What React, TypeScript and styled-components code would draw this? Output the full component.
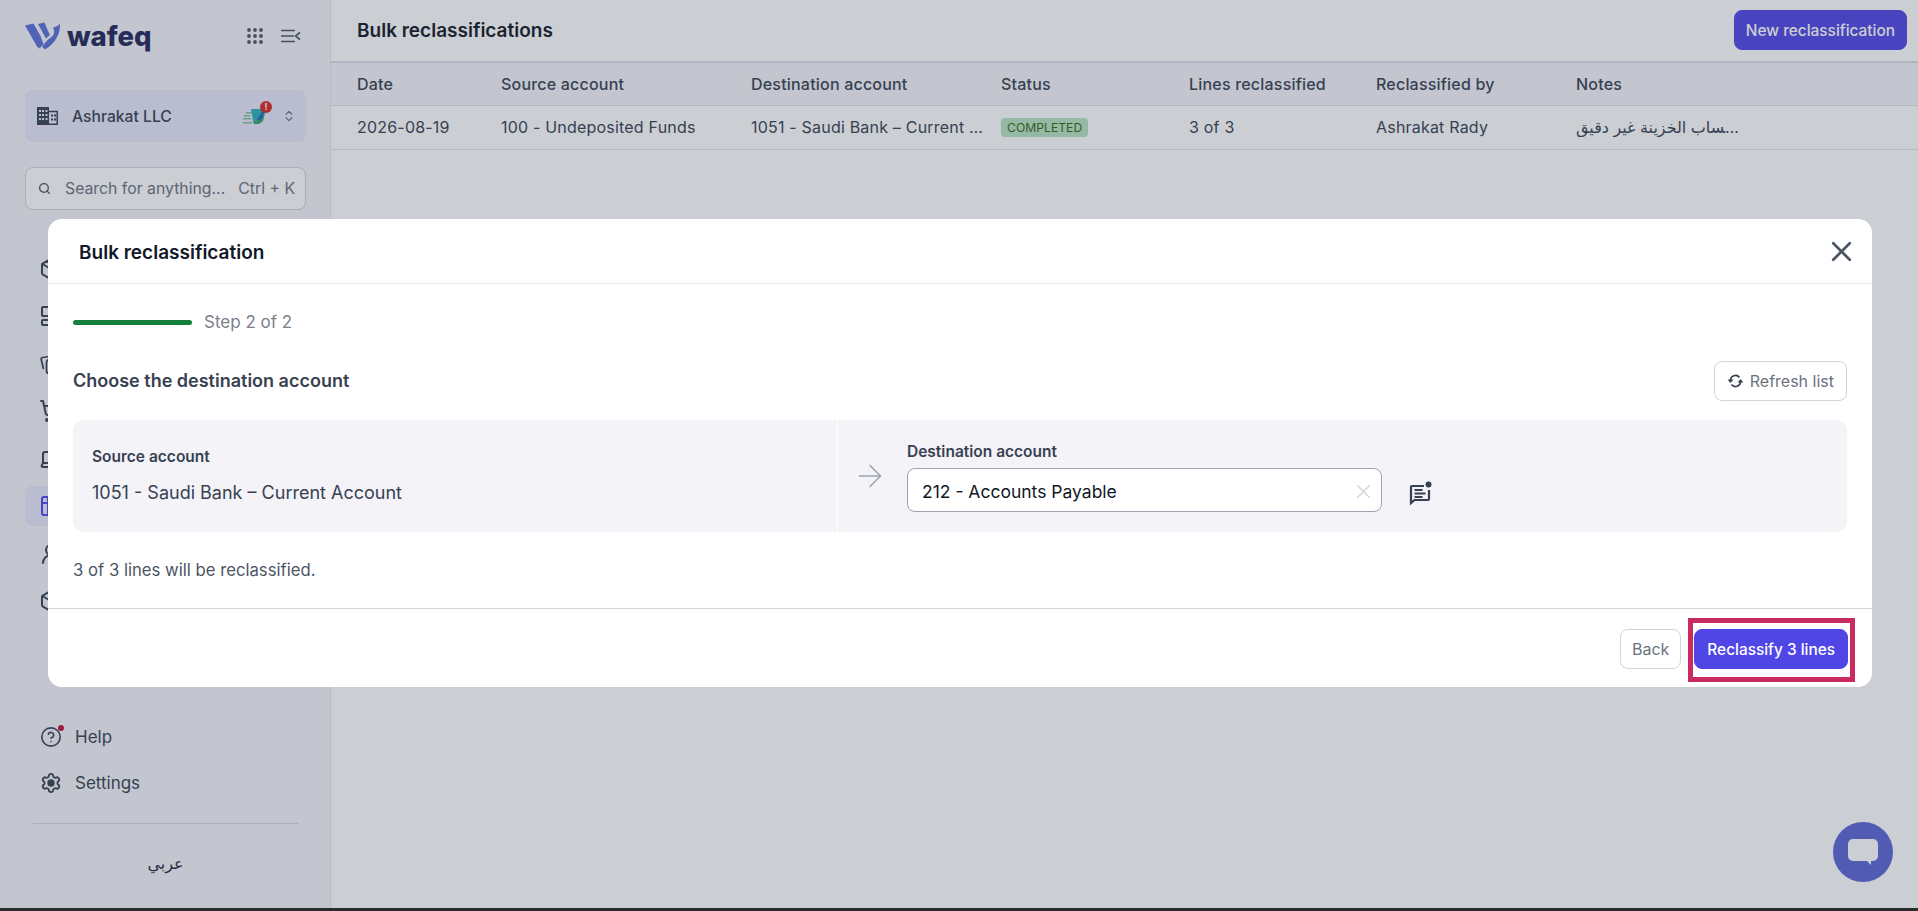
import * as React from 'react';
import styled, { createGlobalStyle } from 'styled-components';
import { Package, LayoutDashboard, ShoppingCart, Laptop, Table2, UserRound, Box, Search, ChevronsUpDown, X, ArrowRight, Settings, CircleHelp } from 'lucide-react';

const GlobalStyle = createGlobalStyle`
  html, body {
    margin: 0;
    padding: 0;
    height: 100%;
    background: #2b2b2d;
    overflow: hidden;
  }
  body, button {
    font-family: Inter, "Noto Sans", "DejaVu Sans", sans-serif;
  }
  * {
    box-sizing: border-box;
  }
`;

const Page = styled.div`
  position: relative;
  display: flex;
  height: 908px;
  overflow: hidden;
  background: #ffffff;
  color: #374151;
`;

const Overlay = styled.div`
  position: absolute;
  inset: 0;
  z-index: 10;
  display: flex;
  align-items: center;
  justify-content: center;
  padding: 0 0 2px 2px;
  background: rgba(55, 67, 86, 0.26);
`;

/* sidebar */
const Sidebar = styled.aside`
  flex: none;
  display: flex;
  flex-direction: column;
  width: 331px;
  padding: 0 24px 0 25px;
  background: #f4f4f8;
  border-right: 1px solid #e5e7eb;
`;

const BrandRow = styled.div`
  display: flex;
  align-items: center;
  height: 74px;
  padding-bottom: 3px;
`;

const BrandName = styled.span`
  margin-left: 6px;
  font-size: 27.5px;
  font-weight: 800;
  color: #1e2558;
`;

const BrandTools = styled.div`
  display: flex;
  align-items: center;
  gap: 18px;
  margin-left: auto;
  margin-right: 5px;
`;

const CompanyBox = styled.div`
  display: flex;
  align-items: center;
  height: 52px;
  margin-top: 16px;
  padding: 0 10px 0 12px;
  border-radius: 8px;
  background: #e8e8fb;
`;

const CompanyName = styled.span`
  margin-left: 14px;
  font-size: 15.7px;
  font-weight: 500;
`;

const CompanyMark = styled.div`
  position: relative;
  display: flex;
  margin-left: auto;
  margin-right: 15px;
`;

const AlertDot = styled.span`
  position: absolute;
  top: -6px;
  right: -5px;
  width: 12px;
  height: 12px;
  border-radius: 50%;
  background: #dc2626;
  color: #ffffff;
  font-size: 9px;
  font-weight: 700;
  line-height: 12px;
  text-align: center;
`;

const SearchBox = styled.div`
  display: flex;
  align-items: center;
  height: 43px;
  margin-top: 25px;
  padding: 0 10px 0 12px;
  border: 1px solid #d1d5db;
  border-radius: 8px;
  background: #ffffff;
  color: #6b7280;
  font-size: 15.8px;
`;

const SearchLabel = styled.span`
  margin-left: 14px;
`;

const Shortcut = styled.span`
  margin-left: auto;
`;

const NavList = styled.nav`
  display: flex;
  flex-direction: column;
  gap: 7.5px;
  margin-top: 38.5px;
`;

const NavItem = styled.div<{ $active?: boolean }>`
  display: flex;
  align-items: center;
  height: 40px;
  padding-left: 14px;
  border-radius: 8px;
  background: ${({ $active }) => ($active ? '#e8e8fb' : 'transparent')};
  color: ${({ $active }) => ($active ? '#4f46e5' : '#374151')};
`;

const SideFooter = styled.div`
  display: flex;
  flex-direction: column;
  gap: 6px;
  margin-top: auto;
`;

const FooterLink = styled.div`
  display: flex;
  align-items: center;
  gap: 13px;
  height: 40px;
  padding-left: 15px;
  font-size: 17px;
  color: #374151;
`;

const HelpIcon = styled.span`
  position: relative;
  display: flex;

  &::after {
    content: '';
    position: absolute;
    top: -1px;
    right: -2px;
    width: 6px;
    height: 6px;
    border-radius: 50%;
    background: #be123c;
  }
`;

const GearIcon = styled(Settings)`
  circle {
    fill: currentColor;
  }
`;

const SideDivider = styled.hr`
  align-self: center;
  width: calc(100% - 16px);
  margin: 14px 0 0;
  padding: 0;
  border: 0;
  border-top: 1px solid #d1d5db;
`;

const LangSwitch = styled.div`
  display: flex;
  align-items: center;
  justify-content: center;
  height: 78px;
  padding-bottom: 11px;
  font-family: "DejaVu Sans", sans-serif;
  font-size: 16px;
  color: #1f2937;
`;

/* main list */
const Main = styled.main`
  flex: 1;
  min-width: 0;
`;

const TopBar = styled.header`
  display: flex;
  align-items: center;
  justify-content: space-between;
  height: 63px;
  padding: 0 11px 1px 26px;
  border-bottom: 2px solid #dcdee6;
`;

const PageTitle = styled.h1`
  margin: 0;
  font-size: 19px;
  font-weight: 600;
  color: #111827;
`;

const Button = styled.button<{ $primary?: boolean }>`
  display: inline-flex;
  align-items: center;
  justify-content: center;
  gap: 6px;
  height: 40px;
  padding: 0 12px;
  border: 1px solid ${({ $primary }) => ($primary ? '#4f46e5' : '#d1d5db')};
  border-radius: 8px;
  background: ${({ $primary }) => ($primary ? '#4f46e5' : '#ffffff')};
  color: ${({ $primary }) => ($primary ? '#ffffff' : '#6b7280')};
  font-size: ${({ $primary }) => ($primary ? '15.4px' : '16px')};
  font-weight: ${({ $primary }) => ($primary ? 500 : 400)};
  cursor: pointer;
`;

const BackButton = styled(Button)`
  padding: 0 11px;
`;

const NewButton = styled(Button)`
  padding: 0 11px;
`;

const TableRow = styled.div<{ $head?: boolean }>`
  display: grid;
  grid-template-columns: 144px 250px 250px 188px 187px 200px 1fr;
  align-items: center;
  height: ${({ $head }) => ($head ? '43px' : '44px')};
  padding: 0 0 ${({ $head }) => ($head ? '0' : '2px')} 26px;
  background: ${({ $head }) => ($head ? '#f4f4f8' : '#ffffff')};
  border-bottom: 1px solid #e0e2e9;
  font-size: 16px;
  letter-spacing: 0.2px;
  font-weight: ${({ $head }) => ($head ? 500 : 400)};
  color: #374151;
`;

const Cell = styled.div<{ $width?: number }>`
  max-width: ${({ $width }) => ($width ? `${$width}px` : 'none')};
  overflow: hidden;
  white-space: nowrap;
  text-overflow: ellipsis;
`;

const StatusBadge = styled.span`
  display: inline-block;
  padding: 0 6px;
  border-radius: 4px;
  background: #b5e4c2;
  color: #3f6212;
  font-size: 12.2px;
  letter-spacing: 0;
  line-height: 19px;
`;

const ChatBubble = styled.div`
  position: absolute;
  right: 25px;
  bottom: 26px;
  display: flex;
  align-items: center;
  justify-content: center;
  width: 60px;
  height: 60px;
  border-radius: 50%;
  background: #5b65d6;
`;

/* dialog */
const Dialog = styled.section`
  display: flex;
  flex-direction: column;
  width: 1824px;
  height: 468px;
  border-radius: 14px;
  background: #ffffff;
  overflow: hidden;
`;

const DialogHeader = styled.header`
  flex: none;
  display: flex;
  align-items: center;
  justify-content: space-between;
  height: 65px;
  padding: 1px 14px 0 31px;
  border-bottom: 1px solid #e5e7f0;
`;

const DialogTitle = styled.h2`
  margin: 2px 0 0;
  font-size: 19px;
  font-weight: 600;
  color: #111827;
`;

const CloseIcon = styled(X)`
  color: #4b5563;
`;

const DialogBody = styled.div`
  flex: 1;
  padding: 27px 25px 0;
`;

const Stepper = styled.div`
  display: flex;
  align-items: center;
  gap: 12px;
  height: 22px;
`;

const StepBar = styled.div`
  width: 119px;
  height: 5px;
  border-radius: 3px;
  background: #15803d;
`;

const StepText = styled.span`
  font-size: 17px;
  color: #7b8089;
`;

const SectionRow = styled.div`
  display: flex;
  align-items: center;
  justify-content: space-between;
  margin-top: 28px;
`;

const SectionTitle = styled.h3`
  margin: 0 0 2px;
  font-size: 18px;
  font-weight: 600;
  color: #374151;
`;

const AccountPanel = styled.div`
  display: grid;
  grid-template-columns: 764px 1fr;
  gap: 1px;
  height: 112px;
  margin-top: 19px;
`;

const SourceCell = styled.div`
  padding: 27px 19px 0;
  border-radius: 10px 0 0 10px;
  background: #f3f3f8;
`;

const DestCell = styled.div`
  display: flex;
  align-items: center;
  padding-left: 14px;
  border-radius: 0 10px 10px 0;
  background: #f3f3f8;
`;

const ArrowIcon = styled(ArrowRight)`
  flex: none;
  color: #9ca3af;
`;

const DestField = styled.div`
  width: 475px;
  margin-left: 19px;
  padding-top: 2px;
`;

const FieldLabel = styled.div`
  font-size: 15.5px;
  font-weight: 600;
  line-height: 20px;
  color: #374151;
`;

const SourceValue = styled.div`
  margin-top: 14px;
  font-size: 18px;
  line-height: 24px;
  color: #374151;
`;

const SelectBox = styled.div`
  display: flex;
  align-items: center;
  justify-content: space-between;
  height: 44px;
  margin-top: 6px;
  padding: 2px 6px 0 14px;
  border: 1px solid #9ca3af;
  border-radius: 8px;
  background: #ffffff;
  font-size: 17.5px;
  color: #111827;
`;

const ClearIcon = styled(X)`
  color: #d1d5db;
`;

const NoteButton = styled.span`
  display: flex;
  margin: 34px 0 0 26px;
  color: #374151;
`;

const Summary = styled.p`
  margin: 26px 0 0;
  font-size: 16.7px;
  line-height: 24px;
  color: #4b5563;
`;

const DialogFooter = styled.footer`
  flex: none;
  display: flex;
  align-items: flex-start;
  justify-content: flex-end;
  gap: 13px;
  height: 79px;
  padding: 20px 24px 0 25px;
  border-top: 1px solid #d1d5db;
`;

const Highlighted = styled.span`
  position: relative;
  display: inline-flex;

  &::after {
    content: '';
    position: absolute;
    inset: -11px -7px -13px -6px;
    border: 5px solid #c92a5f;
    pointer-events: none;
  }
`;

const WafeqLogo = (): JSX.Element => (
  <svg width="36" height="28" viewBox="0 0 36 28" fill="#5b6fd8">
    <path d="M0 3.500 8.500 1.500 15.500 14 18.500 22 14.500 26.500 12 24.500Z" />
    <path d="M13 2 19.500 .5 23 9 25 13 21 16.500Z" />
    <path d="M35 1.500C35.500 11 31 21 20 27.500L17 24.500C20 21 22 18 26.500 15 30 12.500 29.500 8 28 5.500 31 5 33.500 3.500 35 1.500Z" />
  </svg>
);

const GridDots = (): JSX.Element => (
  <svg width="16" height="16" viewBox="0 0 16 16" fill="#4b5563">
    {[2, 8, 14].flatMap(y => [2, 8, 14].map(x => <circle key={`${x}-${y}`} cx={x} cy={y} r="1.900" />))}
  </svg>
);

const MenuCollapse = (): JSX.Element => (
  <svg width="20" height="14" viewBox="0 0 20 14" fill="none" stroke="#4b5563" strokeWidth="1.600">
    <path d="M0 1.500h14M0 7h13M0 12.500h14" />
    <path d="M19 3.500 14.500 7l4.500 3.500" />
  </svg>
);

const BuildingIcon = (): JSX.Element => (
  <svg width="21" height="18" viewBox="0 0 21 18">
    <path fill="#374151" d="M0 0h12v18H0z" />
    <path fill="#e8e8fb" d="M2 3h2v2H2zM5 3h2v2H5zM8.500 3h2v2h-2zM2 7h2v2H2zM5 7h2v2H5zM8.500 7h2v2h-2zM2 11h2v2H2zM5 11h2v2H5zM8.500 11h2v2h-2z" />
    <path fill="none" stroke="#374151" strokeWidth="1.500" d="M12 4.500h8.200v12.700H12" />
    <path fill="#374151" d="M14 7.500h2v2h-2zM17 7.500h2v2h-2zM14 11.500h2v2h-2zM17 11.500h2v2h-2z" />
  </svg>
);

const CompanyGlyph = (): JSX.Element => (
  <svg width="24" height="18" viewBox="0 0 24 18">
    <path fill="#7cc49a" d="M1 8h6v1.500H1zM0 11h8v1.500H0zM0 15h9v1.500H0zM3 5h6v1.500H3z" />
    <path fill="#2bb0b8" d="M8 2h13l-2 10-9 2z" />
    <path fill="#1d63c4" d="M19 5h3l-3 8-6 3 1-3z" />
    <path fill="#37a56a" d="M10 14l9-2 1-5 2-1-2 8-4 3h-5z" />
  </svg>
);

const SheetsIcon = ({ size }: { size: number }): JSX.Element => (
  <svg width={size} height={size} viewBox="0 0 24 24" fill="none" stroke="currentColor" strokeWidth="1.750">
    <path d="M17 3.500 3.500 5.500C2.500 5.700 2 6.400 2.200 7.300L4.500 17" />
    <rect x="7.500" y="7.500" width="14" height="14" rx="3" />
  </svg>
);

const SyncIcon = (): JSX.Element => (
  <svg width="17" height="16" viewBox="0 0 17 16" fill="none" stroke="#374151" strokeWidth="1.700">
    <path d="M3.500 7.500A5 5 0 0 1 12.500 4.500" />
    <path d="M13.500 8.500A5 5 0 0 1 4.500 11.500" />
    <path fill="#374151" stroke="none" d="M.500 6.500h6L3.500 10zM10.500 9.500h6L13.500 6z" />
  </svg>
);

const NoteIcon = (): JSX.Element => (
  <svg width="24" height="25" viewBox="0 0 24 25" fill="none" stroke="currentColor">
    <path strokeWidth="2.200" d="M16 5H4a1 1 0 0 0-1 1v16l3.500-3H20a1 1 0 0 0 1-1V9" />
    <path strokeWidth="1.800" d="M6.500 9h8M6.500 12.500h11M6.500 16h8" />
    <circle cx="20.500" cy="3.500" r="3" fill="currentColor" stroke="none" />
  </svg>
);

const ChatIcon = (): JSX.Element => (
  <svg width="32" height="28" viewBox="0 0 32 28" fill="#ffffff">
    <path d="M6 1h20a5 5 0 0 1 5 5v12a5 5 0 0 1-5 5h-2l0 4-4-4H6a5 5 0 0 1-5-5V6a5 5 0 0 1 5-5Z" />
  </svg>
);

const NAV_ICONS = [Package, LayoutDashboard, SheetsIcon, ShoppingCart, Laptop, Table2, UserRound, Box];

const COLUMNS = ['Date', 'Source account', 'Destination account', 'Status', 'Lines reclassified', 'Reclassified by', 'Notes'];

const App = (): JSX.Element => {
  return (
    <>
      <GlobalStyle />
      <Page>
        <Sidebar>
          <BrandRow>
            <WafeqLogo />
            <BrandName>wafeq</BrandName>
            <BrandTools>
              <GridDots />
              <MenuCollapse />
            </BrandTools>
          </BrandRow>
          <CompanyBox>
            <BuildingIcon />
            <CompanyName>Ashrakat LLC</CompanyName>
            <CompanyMark>
              <CompanyGlyph />
              <AlertDot>!</AlertDot>
            </CompanyMark>
            <ChevronsUpDown size={14} color="#6b7280" />
          </CompanyBox>
          <SearchBox>
            <Search size={13} strokeWidth={2.5} color="#4b5563" />
            <SearchLabel>Search for anything...</SearchLabel>
            <Shortcut>Ctrl + K</Shortcut>
          </SearchBox>
          <NavList>
            {NAV_ICONS.map((Icon, i) => (
              <NavItem key={i} $active={i === 5}>
                <Icon size={24} />
              </NavItem>
            ))}
          </NavList>
          <SideFooter>
            <FooterLink>
              <HelpIcon><CircleHelp size={22} strokeWidth={1.75} /></HelpIcon>
              Help
            </FooterLink>
            <FooterLink>
              <GearIcon size={22} strokeWidth={2} />
              Settings
            </FooterLink>
            <SideDivider />
            <LangSwitch>عربي</LangSwitch>
          </SideFooter>
        </Sidebar>
        <Main>
          <TopBar>
            <PageTitle>Bulk reclassifications</PageTitle>
            <NewButton $primary>New reclassification</NewButton>
          </TopBar>
          <TableRow $head>
            {COLUMNS.map(c => <Cell key={c}>{c}</Cell>)}
          </TableRow>
          <TableRow>
            <Cell>2026-08-19</Cell>
            <Cell>100 - Undeposited Funds</Cell>
            <Cell $width={232}>1051 - Saudi Bank – Current Account</Cell>
            <Cell><StatusBadge>COMPLETED</StatusBadge></Cell>
            <Cell>3 of 3</Cell>
            <Cell>Ashrakat Rady</Cell>
            <Cell $width={169}>رصيد حساب الخزينة غير دقيق</Cell>
          </TableRow>
        </Main>
        <ChatBubble><ChatIcon /></ChatBubble>
        <Overlay>
          <Dialog>
            <DialogHeader>
              <DialogTitle>Bulk reclassification</DialogTitle>
              <CloseIcon size={33} strokeWidth={2} />
            </DialogHeader>
            <DialogBody>
              <Stepper>
                <StepBar />
                <StepText>Step 2 of 2</StepText>
              </Stepper>
              <SectionRow>
                <SectionTitle>Choose the destination account</SectionTitle>
                <Button><SyncIcon />Refresh list</Button>
              </SectionRow>
              <AccountPanel>
                <SourceCell>
                  <FieldLabel>Source account</FieldLabel>
                  <SourceValue>1051 - Saudi Bank – Current Account</SourceValue>
                </SourceCell>
                <DestCell>
                  <ArrowIcon size={36} strokeWidth={1} />
                  <DestField>
                    <FieldLabel>Destination account</FieldLabel>
                    <SelectBox>
                      212 - Accounts Payable
                      <ClearIcon size={23} strokeWidth={1.5} />
                    </SelectBox>
                  </DestField>
                  <NoteButton><NoteIcon /></NoteButton>
                </DestCell>
              </AccountPanel>
              <Summary>3 of 3 lines will be reclassified.</Summary>
            </DialogBody>
            <DialogFooter>
              <BackButton>Back</BackButton>
              <Highlighted><Button $primary>Reclassify 3 lines</Button></Highlighted>
            </DialogFooter>
          </Dialog>
        </Overlay>
      </Page>
    </>
  );
};

export default App;
